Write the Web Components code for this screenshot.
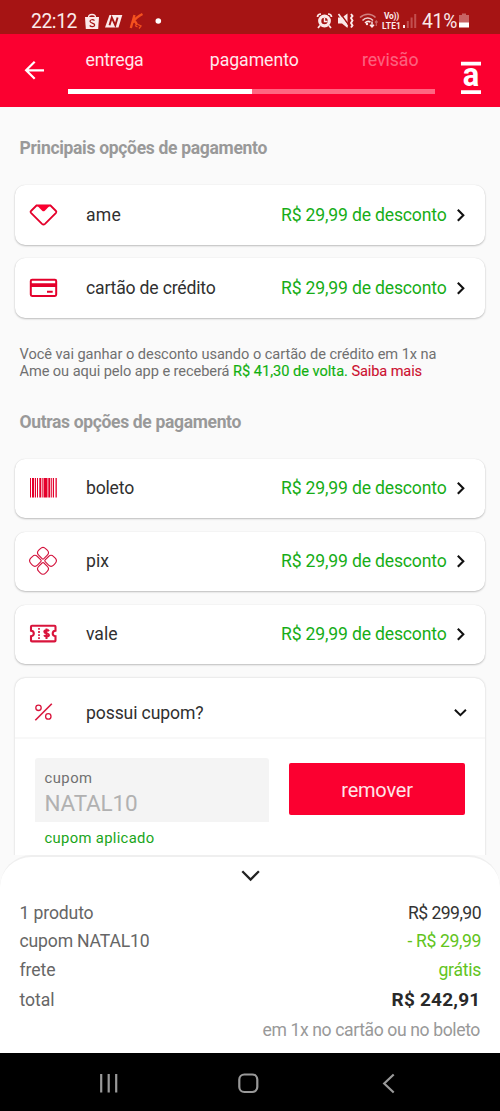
<!DOCTYPE html>
<html lang="pt-BR">
<head>
<meta charset="utf-8">
<meta name="viewport" content="width=device-width">
<title>Pagamento</title>
<style>
html,body{margin:0;background:#fafafa}
body{font-family:Roboto,"Liberation Sans",sans-serif}
</style>
</head>
<body>
<checkout-app></checkout-app>
<script>
const define = (name, html, setup) => customElements.define(name, class extends HTMLElement {
  connectedCallback() {
    if (this.shadowRoot) return;
    const root = this.attachShadow({ mode: 'open' });
    const t = document.createElement('template');
    t.innerHTML = typeof html === 'function' ? html(this) : html;
    root.appendChild(t.content.cloneNode(true));
    if (setup) setup(this, root);
  }
});

/* One line of text, tracked so that it fills the width in its "w" attribute. */
define('fit-text', `<style>:host{display:block;flex:none;white-space:pre}span{display:inline-block}</style><span><slot></slot></span>`,
  (el, root) => {
    const w = parseFloat(el.getAttribute('w'));
    el.style.width = w + 'px';
    const natural = root.querySelector('span').getBoundingClientRect().width;
    if (natural) el.style.letterSpacing = ((w - natural) / el.textContent.length) + 'px';
  });

define('status-bar', `<style>
:host{display:flex;box-sizing:border-box;height:34px;background:#a61414;color:#fbeaea;padding:9px 30px 0 31px;font-size:19.300px;line-height:25px}
svg{flex:none;display:block}
.sp{flex:1}
.lte{display:flex;flex-direction:column;padding:2px 0 0;margin-left:2px;font-size:8.400px;line-height:10px;font-weight:700;align-items:center}
</style>
<fit-text w="46">22:12</fit-text>
<svg width="90" height="25" viewBox="77 9 90 25">
 <path d="M85 17h14l-.8 12h-12.400z" fill="#fbeaea"/><path d="M88.500 17.500c0-4 7-4 7 0" fill="none" stroke="#fbeaea" stroke-width="1.300"/>
 <path d="M94.500 20.500c-1.500-1.300-4.500-1-4.500.8 0 2.200 4.700 1.400 4.700 3.700 0 2-3.600 2-5 .5" fill="none" stroke="#a61414" stroke-width="1.200"/>
 <path d="M109.500 15h12.800l-3.800 12.500h-13.500z" fill="#fbeaea"/><path d="M109.500 25.300l2.300-7.800 3.500 7.800 2.300-7.800" fill="none" stroke="#a61414" stroke-width="1.900"/>
 <path d="M134.500 15l-3.700 13M142.500 14c-4 2-7 4-9.500 8 2-1.500 3 0 4 3" fill="none" stroke="#f4511e" stroke-width="2.400"/><path d="M135 25.500l2.500 1.500M138 24.500l3 1.500-2 2.500" fill="none" stroke="#f4511e" stroke-width="1.300"/>
 <circle cx="158.300" cy="21" r="2.800" fill="#fff"/>
</svg>
<span class="sp"></span>
<svg width="64" height="25" viewBox="317 9 64 25" fill="none" stroke="#fbeaea">
 <circle cx="325.500" cy="21" r="4.800" stroke-width="3.200"/><path d="M325.500 18v3.500h3" stroke-width="1.400"/><path d="M318.500 17c0-2 1.500-3 3.500-3M332.500 17c0-2-1.500-3-3.500-3M321 25.500l-2 2.500M330 25.500l2 2.500" stroke-width="1.700"/>
 <path d="M339 17.500h4l5.500-4v14.500l-5.500-4.500h-4z" fill="#fbeaea" stroke="none"/><path d="M341 13l9.500 13" stroke="#a61414" stroke-width="1.400"/><path d="M339.500 14l9 12.500" stroke-width="1.600"/><path d="M352 14l1.500 2-1.500 2 1.500 2.500-1.500 2.500 1.500 2.500-1.500 2" stroke-width="1.900"/>
 <path d="M361 17.500c4.500-4.500 11.500-4.500 15.500 0" stroke="#d07f7f" stroke-width="1.500"/><path d="M363.500 20.500c3-3.500 7.500-3.500 10.500 0" stroke="#eccaca" stroke-width="1.500"/><path d="M366 23c2-2 3.500-2 5.500-1" stroke-width="1.600"/><circle cx="368" cy="24" r="1.200" fill="#fbeaea" stroke="none"/><path d="M373 21.500v5.500M371 24.800l2 2.200 2-2.200" stroke-width="1.400"/><path d="M377.300 26v-5M376 22.500l1.300-1.500 1.300 1.500" stroke="#c86464" stroke-width="1.200"/>
</svg>
<div class="lte"><fit-text w="15">Vo))</fit-text><fit-text w="19">LTE1</fit-text></div>
<svg width="21" height="25" viewBox="401 9 21 25"><path d="M403 25h2v3h-2z" fill="#fbeaea"/><path d="M406.800 21h2v7h-2zM410.600 17.500h2v10.500h-2zM414.200 14h2v14h-2z" fill="#c24f4f"/></svg>
<fit-text w="35">41%</fit-text>
<svg width="13" height="25" viewBox="457 9 13 25"><path d="M459 15h3v-1.500h4V15h3v8h-10z" fill="#c86464"/><path d="M459 22.500h10v5h-10z" fill="#fff"/></svg>`);

define('step-header', `<style>
:host{display:grid;grid-template-columns:68px 367px 1fr;height:73px;background:#fb0030;color:#ffe8ec}
svg{display:block}
.tabs{display:flex;font-size:17.700px;line-height:24px;padding:14px 16.500px 0 17.500px;justify-content:space-between}
.tabs :nth-child(2){margin-left:3px}
.next{opacity:.42}
.bar{margin-top:17px;height:5px;background:#ff6681}.bar i{display:block;height:5px;width:184px;background:#fff}
</style>
<svg width="68" height="73" viewBox="0 34 68 73" fill="none" stroke="#fff" stroke-width="2.200"><path d="M44 70.300H26M34.700 61.800l-8.600 8.500 8.600 8.500"/></svg>
<div><div class="tabs"><fit-text w="58">entrega</fit-text><fit-text w="89">pagamento</fit-text><fit-text class="next" w="56.500">revisão</fit-text></div><div class="bar"><i></i></div></div>
<svg width="65" height="73" viewBox="435 34 65 73"><path d="M461 61.800h20v3.700h-20zM461 90.200h20v3.800h-20z" fill="#fff"/><text x="462.800" y="86" textLength="16.500" lengthAdjust="spacingAndGlyphs" font-size="33" font-weight="700" fill="#fff">a</text></svg>`);

const pixCell = 'M2.200 .9H7Q10.500.9 10.500 4.500V6.500Q10.500 10.500 6.500 10.500H4.500Q.9 10.500 .9 7V2.200Q.9.9 2.200.9z';
const icons = {
  ame: `<path d="M36.500 205h14l5.500 5.500q.8.800 0 1.800L45 223.300q-1.500 1.400-3 0L31 212.300q-.9-1 0-1.800z" fill="none" stroke="#e4002b" stroke-width="1.800"/><path d="M36.500 204.500h14l-5.700 5.700q-1.300 1.200-2.600 0z" fill="#fb0030"/>`,
  card: `<rect x="30.800" y="206.300" width="25.400" height="16.100" rx="1.300" fill="none" stroke="#e4002b" stroke-width="2"/><path d="M31 209.700h25v3.700H31zM47 217.300h5.700v1.900H47z" fill="#e4002b"/>`,
  boleto: `<path d="M30 204.500h1v19.500h-1zM32 204.500h2.200v19.500h-2.200zM35 204.500h1v19.500h-1zM37 204.500h1v19.500h-1zM39.300 204.500h1.700v19.500h-1.700zM41.700 204.500h1v19.500h-1zM43.500 204.500h4v19.500h-4zM48.300 204.500h2v19.500h-2zM51.200 204.500h1v19.500h-1zM53 204.500h1v19.500h-1zM55.500 204.500h1.300v19.500h-1.300z" fill="#e4002b"/>`,
  pix: `<g transform="translate(43 214.300) rotate(45)" fill="none" stroke="#d3113b" stroke-width="1.100">${[0, 90, 180, 270].map(a => `<path transform="rotate(${a})" d="${pixCell}"/>`).join('')}</g>`,
  vale: `<path d="M32 206.300h22.500q1 0 1 1v3.800q-2.800.5-2.800 2.800t2.800 2.800v4.200q0 1-1 1H32q-1 0-1-1v-4.200q2.800-.5 2.800-2.800T31 211.100v-3.800q0-1 1-1z" fill="none" stroke="#d9143c" stroke-width="2.100"/><path d="M39 208.500v11.500" stroke="#d9143c" stroke-width="1.700" stroke-dasharray="1.800 1.300"/><path d="M49 211.600c-1-1.400-4.700-1.400-4.700.6 0 2.300 4.700 1.100 4.700 3.400 0 2-3.900 1.800-5 .2M46.500 208.900v10.500" fill="none" stroke="#d9143c" stroke-width="2"/>`,
  cupom: `<path d="M35.300 221.700l16.500-16.500" stroke="#d9143c" stroke-width="1.600"/><circle cx="38.500" cy="209.300" r="2.700" fill="none" stroke="#d9143c" stroke-width="1.300"/><circle cx="48.300" cy="217.900" r="2.700" fill="none" stroke="#d9143c" stroke-width="1.300"/>`
};

define('pay-option', el => `<style>
:host{display:flex;align-items:center;height:59.500px;background:#fff;border-radius:10px;box-shadow:0 1px 2px rgba(0,0,0,.24),0 0 1px rgba(0,0,0,.12);font-size:17.600px;line-height:24px;color:#303030}
:host([flat]){height:auto;box-shadow:none;background:none}
svg{display:block;flex:none}.sp{flex:1}.off{color:#17ad17}
</style>
<svg width="71" height="30" viewBox="15 199.500 71 30">${icons[el.getAttribute('icon')]}</svg>
<fit-text w="${el.getAttribute('w') - 1}">${el.getAttribute('label')}</fit-text><span class="sp"></span>
${el.hasAttribute('flat')
  ? `<svg width="38" height="30" viewBox="447 697 38 30"><path d="M454.900 708.800l5.500 5.400 5.500-5.400" fill="none" stroke="#111" stroke-width="2"/></svg>`
  : `<fit-text class="off" w="165.500">R$ 29,99 de desconto</fit-text><svg width="38.500" height="30" viewBox="446.500 199.500 38.500 30"><path d="M457.300 209.200l5.500 5.500-5.500 5.500" fill="none" stroke="#111" stroke-width="2.100"/></svg>`}`);

define('coupon-panel', `<style>
:host{display:block;height:200px;background:#fff;border-radius:10px 10px 0 0;box-shadow:0 0 2px rgba(0,0,0,.22)}
pay-option{padding:20px 0 9px}
hr{border:0;margin:0;height:2px;background:#f8f8f8}
.form{display:flex;justify-content:space-between;align-items:flex-start;padding:19.500px 20px 0}
.field{box-sizing:border-box;width:234px;height:63.500px;background:#f4f4f4;border-radius:3px 3px 0 0;padding:10px 9.500px 0}
.lab{font-size:14.800px;line-height:20px;color:#707070}.val{font-size:22.500px;line-height:31px;color:#b1b1b1}
.ok{font-size:14.800px;line-height:20px;color:#1aa51a;padding:6px 9.500px 0}
.btn{box-sizing:border-box;width:176px;height:52px;margin-top:4.500px;background:#fb0030;border-radius:2px;display:flex;justify-content:center;color:#ffe4e8;font-size:20px;line-height:55px}
</style>
<pay-option flat icon="cupom" label="possui cupom?" w="118.500"></pay-option><hr>
<div class="form"><div><div class="field"><fit-text class="lab" w="48">cupom</fit-text><fit-text class="val" w="93">NATAL10</fit-text></div><fit-text class="ok" w="110">cupom aplicado</fit-text></div>
<div class="btn"><fit-text w="71.500">remover</fit-text></div></div>`);

define('section-title', `<style>:host{display:block;font-size:17.500px;line-height:24px;font-weight:700;color:#999}</style><slot></slot>`);

define('pay-content', `<style>
:host{display:block;box-sizing:border-box;height:748px;overflow:hidden;padding:29px 15px 0;background:#fafafa}
section-title{padding-left:4.500px}
.list{display:grid;row-gap:13.500px}
.a{margin-top:25px}.b{margin-top:25px}
.note{font-size:14.600px;line-height:17px;color:#707070;padding:28.500px 4.500px 0}
.row{display:flex}.g{color:#10b010;-webkit-text-stroke:.15px}.r{color:#cc1030;-webkit-text-stroke:.1px}
.t2{padding-top:29.500px}
</style>
<section-title><fit-text w="247.500">Principais opções de pagamento</fit-text></section-title>
<div class="list a"><pay-option icon="ame" label="ame" w="36"></pay-option><pay-option icon="card" label="cartão de crédito" w="130.500"></pay-option></div>
<div class="note"><fit-text w="417">Você vai ganhar o desconto usando o cartão de crédito em 1x na</fit-text>
<div class="row"><fit-text w="213.500">Ame ou aqui pelo app e receberá </fit-text><fit-text class="g" w="118.500">R$ 41,30 de volta. </fit-text><fit-text class="r" w="70.500">Saiba mais</fit-text></div></div>
<section-title class="t2"><fit-text w="221.500">Outras opções de pagamento</fit-text></section-title>
<div class="list b"><pay-option icon="boleto" label="boleto" w="49"></pay-option><pay-option icon="pix" label="pix" w="24"></pay-option><pay-option icon="vale" label="vale" w="32.500"></pay-option><coupon-panel></coupon-panel></div>`);

define('order-summary', `<style>
:host{display:block;height:197.500px;background:#fafafa}
.sheet{box-sizing:border-box;height:100%;background:#fff;border-top:2px solid #efefef;border-radius:32px 32px 0 0;padding:11px 19px 0 19.500px}
svg{display:block;margin:0 auto}
.row{display:flex;justify-content:space-between;font-size:17.600px;line-height:24px;color:#666}
.dark{color:#333}.g{color:#62c41c}.tot{font-size:19px;font-weight:700;color:#292929;margin-right:.5px}.m{color:#999}
</style>
<div class="sheet">
<svg width="24" height="20" viewBox="238 868 24 20"><path d="M242.300 871.300l8.300 8.300 8.300-8.300" fill="none" stroke="#222" stroke-width="2.300"/></svg>
<div class="row" style="margin-top:13px"><fit-text w="74">1 produto</fit-text><fit-text class="dark" w="73">R$ 299,90</fit-text></div>
<div class="row" style="margin-top:4px"><fit-text w="130">cupom NATAL10</fit-text><fit-text class="g" w="73.500">- R$ 29,99</fit-text></div>
<div class="row" style="margin-top:5px"><fit-text w="36">frete</fit-text><fit-text class="g" w="42.500">grátis</fit-text></div>
<div class="row" style="margin-top:6px"><fit-text w="35">total</fit-text><fit-text class="tot" w="89">R$ 242,91</fit-text></div>
<div class="row m" style="margin-top:5.500px;justify-content:flex-end;padding-right:1px"><fit-text w="217.500">em 1x no cartão ou no boleto</fit-text></div>
</div>`);

define('nav-bar', `<style>:host{display:flex;height:58.500px;background:#000}svg{display:block}</style>
<svg width="500" height="58.500" viewBox="0 1052.500 500 58.500" fill="none" stroke="#999" stroke-width="2.200"><path d="M101.200 1073.500v18.500M108.700 1073.500v18.500M116.200 1073.500v18.500"/><rect x="239.300" y="1074" width="18" height="17.500" rx="5"/><path d="M393.700 1074l-9.500 9 9.500 9"/></svg>`);

define('checkout-app', `<style>:host{display:flex;flex-direction:column;width:500px;height:1111px;overflow:hidden}:host>*{flex:none}</style>
<status-bar></status-bar><step-header></step-header><pay-content></pay-content><order-summary></order-summary><nav-bar></nav-bar>`);
</script>
</body>
</html>
